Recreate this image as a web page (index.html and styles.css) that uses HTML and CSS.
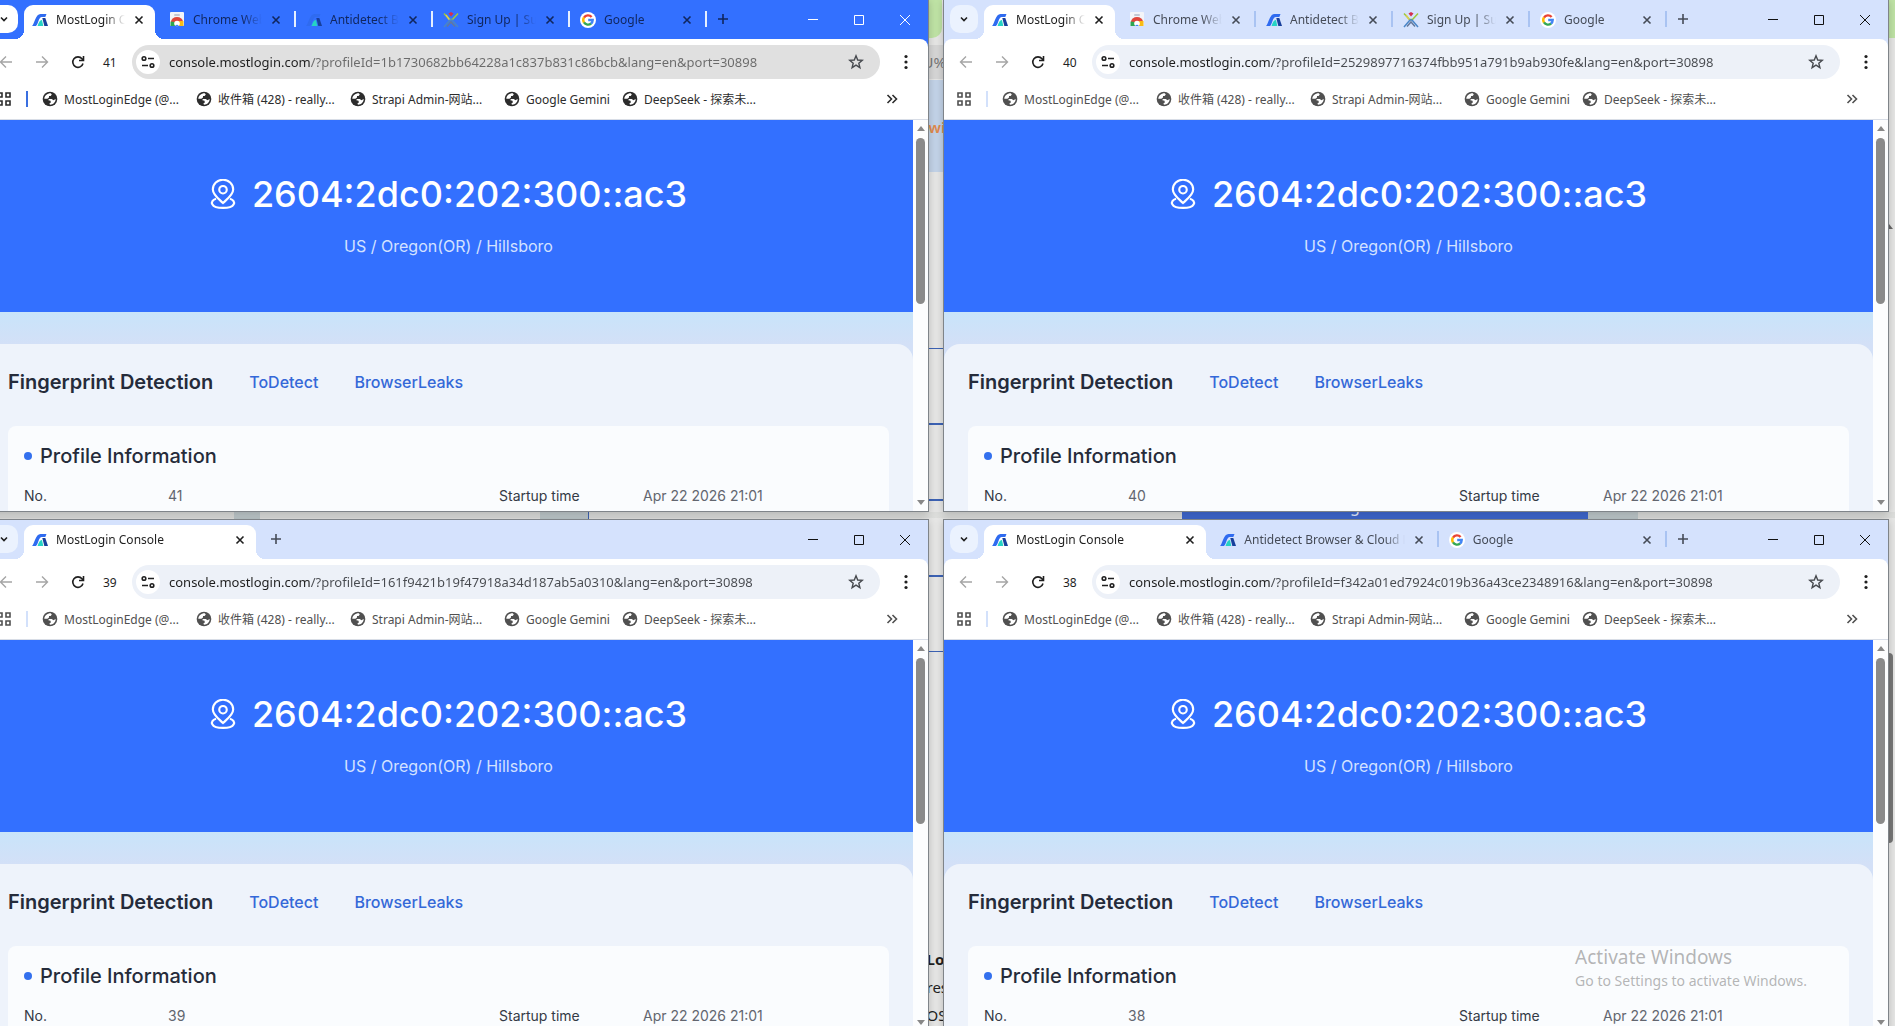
FILE: index.html
```html
<!DOCTYPE html>
<html lang="en">
<head>
  <meta charset="UTF-8" />
  <meta name="viewport" content="width=device-width, initial-scale=1.0"/>
  <title>MostLogin Console</title>
  <link rel="stylesheet" href="styles.css">
</head>
<body>

  <svg class="sprite" aria-hidden="true">
    <symbol id="logo" viewBox="0 0 16 16">
      <path fill="#2f6bf0" d="M0 14C2.500 12 3.500 2 8.500 2H14.500L13.300 5H9.800C6.500 5 6.500 12 4 14Z"/>
      <path fill="#25d3c4" d="M5.500 14C6.500 12 7 8.500 10 8L11.300 14Z"/>
      <path fill="#173f9c" d="M10.300 6H13.300L16 14H12.300Z"/>
    </symbol>
    <symbol id="store" viewBox="0 0 16 16">
      <rect x="1" y="0" width="14" height="14" rx="1" fill="#f3f4f8"/>
      <rect x="5" y="2" width="6" height="2" rx="1" fill="#c3c7d3"/>
      <path fill="#e0453a" d="M2 10a6 5 0 0 1 12 0l-2 1H4Z"/>
      <path fill="#f9bc15" d="M9 9h5.500v5H10Z"/>
      <path fill="#2fa552" d="M1.500 9.500L6 10l1 4H1.500Z"/>
      <circle cx="8" cy="11.500" r="2.800" fill="#fff"/>
      <path fill="#4285f4" d="M6.200 14a2 2.400 0 0 1 3.600 0Z"/>
    </symbol>
    <symbol id="person" viewBox="0 0 16 16">
      <g fill="none" stroke-width="1.500">
        <path stroke="#9dc83c" d="M1 1.500L6.500 7.500H9.500L15 1.500"/>
        <path stroke="#d9cf52" d="M3 3L7 8.500"/>
        <path stroke="#4a86c8" d="M1 15L7 8H9L15 15"/>
        <path stroke="#64799c" d="M4 14.500L8 10L12 14.500"/>
      </g>
      <path fill="#d32f4f" d="M5.500 1.500L8 0L10.500 1.500L8 4.500Z"/>
    </symbol>
    <symbol id="google" viewBox="0 0 16 16">
      <circle cx="8" cy="8" r="8" fill="#fff"/>
      <g fill="none" stroke-width="2.400">
        <path stroke="#ea4335" d="M4 5.600A4.700 4.700 0 0 1 11.600 5"/>
        <path stroke="#fbbc05" d="M4 5.500A4.700 4.700 0 0 0 4 10.500"/>
        <path stroke="#34a853" d="M4 10.400A4.700 4.700 0 0 0 11.100 11.500"/>
        <path stroke="#4285f4" d="M8.200 8H12.700A4.700 4.700 0 0 1 11 11.600"/>
      </g>
    </symbol>
    <symbol id="globe" viewBox="0 0 16 16">
      <circle cx="8" cy="8" r="7.300" fill="currentColor"/>
      <path fill="#fff" d="M2.300 7.800C2.300 4.800 5 2.300 8.800 2.300L9.800 3.400L8.600 5H7V6.600L5.400 7.800Z"/>
      <path fill="#fff" d="M6.600 8H9.800L11.400 9.200L13.700 8C13.700 11 11.300 13.700 8 13.700L7.400 12.600L9 11.200L8.200 9.600H6.600Z"/>
    </symbol>
    <symbol id="chevron" viewBox="0 0 16 16"><path class="line thick" d="M5 6.500L8 9.500L11 6.500"/></symbol>
    <symbol id="cross" viewBox="0 0 16 16"><path class="line thick" d="M4.500 4.500L11.500 11.500M11.500 4.500L4.500 11.500"/></symbol>
    <symbol id="plus" viewBox="0 0 16 16"><path class="line thick" d="M8 3V13M3 8H13"/></symbol>
    <symbol id="min" viewBox="0 0 16 16"><path class="line" d="M3 8.500H13"/></symbol>
    <symbol id="max" viewBox="0 0 16 16"><path class="line" d="M3.500 4.500H12.500V13.500H3.500Z"/></symbol>
    <symbol id="exit" viewBox="0 0 16 16"><path class="line" d="M3 4L13 14M13 4L3 14"/></symbol>
    <symbol id="back" viewBox="0 0 16 16"><path class="line medium" d="M14 8H3M8 2.500L2.500 8L8 13.500"/></symbol>
    <symbol id="forward" viewBox="0 0 16 16"><path class="line medium" d="M2 8H13M8 2.500L13.500 8L8 13.500"/></symbol>
    <symbol id="reload" viewBox="0 0 16 16"><path class="line thick" d="M13 9.500A5.200 5.200 0 1 1 12 4.800L13.300 6.300M13.500 2V6.500H9"/></symbol>
    <symbol id="tune" viewBox="0 0 16 16">
      <g class="line thick"><circle cx="4" cy="4.500" r="1.800"/><circle cx="12" cy="11.500" r="1.800"/><path d="M8 4.500H14M2 11.500H8"/></g>
    </symbol>
    <symbol id="star" viewBox="0 0 16 16"><path class="line medium" d="M8 1.800L9.700 6L14.300 6.300L10.800 9.200L11.900 13.700L8 11.200L4.100 13.700L5.200 9.200L1.700 6.300L6.300 6Z"/></symbol>
    <symbol id="kebab" viewBox="0 0 16 16"><g fill="currentColor"><circle cx="8" cy="2.500" r="1.600"/><circle cx="8" cy="8" r="1.600"/><circle cx="8" cy="13.500" r="1.600"/></g></symbol>
    <symbol id="apps" viewBox="0 0 16 16"><path class="line thick" d="M2 2H6V6H2ZM10 2H14V6H10ZM2 10H6V14H2ZM10 10H14V14H10Z"/></symbol>
    <symbol id="more" viewBox="0 0 16 16"><path class="line thick" d="M3.500 4L7.500 8L3.500 12M8.500 4L12.500 8L8.500 12"/></symbol>
    <symbol id="pin" viewBox="0 0 24 28">
      <g class="line wide">
        <path d="M12 22.500C8 18.500 2.500 14.500 2.500 9.700A9.500 9 0 0 1 21.500 9.700C21.500 14.500 16 18.500 12 22.500Z"/>
        <circle cx="12" cy="10" r="3.500"/>
        <path d="M5.500 18.500C-1 20.500 .5 27 12 27S25 20.500 18.500 18.500"/>
      </g>
    </symbol>
  </svg>

  <!-- what is open behind the browser windows -->
  <div class="backdrop">
    <div class="column">
      <span class="green"></span>
      <span class="address">U%</span>
      <span class="banner">wi</span>
      <span class="rule"></span>
      <span class="rule"></span>
      <span class="rule"></span>
      <span class="rule"></span>
      <span class="rule last"></span>
      <span class="note"><b>Lo</b><br>res<br>OS</span>
    </div>
    <div class="band">
      <span class="patch"></span>
      <span class="patch box"></span>
      <span class="blue">g</span>
      <span class="patch side"></span>
    </div>
    <div class="edge">
      <span class="green"></span>
      <span class="arrow"></span>
      <span class="thumb"></span>
    </div>
  </div>

  <main class="desktop" id="desktop"></main>

  <div class="watermark">
    <p class="big">Activate Windows</p>
    <p>Go to Settings to activate Windows.</p>
  </div>

  <script>
    const windows = [
      { no: 41, id: "1b1730682bb64228a1c837b831c86bcb", theme: "vivid", tabs: ["console", "store", "anti", "signup", "google"] },
      { no: 40, id: "2529897716374fbb951a791b9ab930fe", theme: "", tabs: ["console", "store", "anti", "signup", "google"] },
      { no: 39, id: "161f9421b19f47918a34d187ab5a0310", theme: "", tabs: ["console"] },
      { no: 38, id: "f342a01ed7924c019b36a43ce2348916", theme: "", tabs: ["console", "anti", "google"] }
    ];

    const tabInfo = {
      console: ["logo", "MostLogin Console"],
      store: ["store", "Chrome Web Store"],
      anti: ["logo", "Antidetect Browser &amp; Cloud Phone"],
      signup: ["person", "Sign Up | Sun"],
      google: ["google", "Google"]
    };

    const bookmarks = ["MostLoginEdge (@...", "收件箱 (428) - really...", "Strapi Admin-网站...", "Google Gemini", "DeepSeek - 探索未..."];

    function icon(name, cls = "icon") {
      return `<svg class="${cls}" aria-hidden="true"><use href="#${name}"></use></svg>`;
    }

    function button(name, cls, label) {
      return `<button class="${cls}" aria-label="${label}">${icon(name)}</button>`;
    }

    function tab(key, i) {
      const [img, title] = tabInfo[key];
      return `
        <li class="tab ${i === 0 ? "active" : ""}">
          ${icon(img)}
          <span class="tab-title">${title}</span>
          ${button("cross", "close", "Close tab")}
        </li>`;
    }

    function browser(w) {
      return `
        <section class="browser ${w.theme}">
          <header class="strip">
            ${button("chevron", "search", "Search tabs")}
            <ul class="tabs">${w.tabs.map(tab).join("")}</ul>
            ${button("plus", "new-tab", "New tab")}
            <div class="controls">
              ${button("min", "control", "Minimize")}${button("max", "control", "Maximize")}${button("exit", "control", "Close")}
            </div>
          </header>
          <div class="toolbar">
            ${button("back", "tool dim", "Back")}
            ${button("forward", "tool dim", "Forward")}
            ${button("reload", "tool", "Reload")}
            <span class="number">${w.no}</span>
            <div class="omnibox">
              ${button("tune", "site", "Site information")}
              <input type="text" aria-label="Address" spellcheck="false" value="console.mostlogin.com/?profileId=${w.id}&amp;lang=en&amp;port=30898">
              ${button("star", "star", "Bookmark this page")}
            </div>
            ${button("kebab", "tool menu", "Menu")}
          </div>
          <nav class="bookmarks">
            ${button("apps", "apps", "Apps")}
            <ul>${bookmarks.map(b => `<li><a href="#">${icon("globe")}${b}</a></li>`).join("")}</ul>
            ${button("more", "more", "More bookmarks")}
          </nav>
          <div class="view">
            <div class="page">
              <div class="hero">
                <h1>${icon("pin", "pin")}2604:2dc0:202:300::ac3</h1>
                <p>US / Oregon(OR) / Hillsboro</p>
              </div>
              <div class="panel">
                <div class="panel-head">
                  <h2>Fingerprint Detection</h2>
                  <a href="#">ToDetect</a>
                  <a href="#">BrowserLeaks</a>
                </div>
                <div class="card">
                  <h3>Profile Information</h3>
                  <dl>
                    <dt>No.</dt><dd>${w.no}</dd>
                    <dt>Startup time</dt><dd>Apr 22 2026 21:01</dd>
                  </dl>
                </div>
              </div>
            </div>
            <div class="scrollbar"><i class="up"></i><i class="bar"></i><i class="down"></i></div>
          </div>
        </section>`;
    }

    document.getElementById("desktop").innerHTML = windows.map(browser).join("");
  </script>

</body>
</html>
```
FILE: styles.css
```css
* {
  margin: 0;
  padding: 0;
  box-sizing: border-box;
}

body {
  position: relative;
  height: 100vh;
  overflow: hidden;
  background: #e6e6e5;
  font-family: "Noto Sans", "Noto Sans CJK SC", sans-serif;
  font-size: 12px;
  color: #1f1f1f;
}

ul {
  list-style: none;
}

a {
  color: inherit;
  text-decoration: none;
}

button {
  display: flex;
  align-items: center;
  justify-content: center;
  flex: none;
  border: none;
  background: none;
  color: inherit;
  cursor: pointer;
}

.sprite {
  position: absolute;
  width: 0;
  height: 0;
}

.icon {
  width: 16px;
  height: 16px;
  flex: none;
}

.line {
  fill: none;
  stroke: currentColor;
  stroke-width: 1;
}

.medium {
  stroke-width: 1.4;
}

.thick {
  stroke-width: 1.6;
}

.wide {
  stroke-width: 2;
}

/* windows */
.desktop {
  position: relative;
  display: grid;
  grid-template-columns: 1fr 1fr;
  grid-auto-rows: 50vh;
  gap: 7px 14px;
  margin: -1px 6px 0 -17px;
}

.browser {
  --strip: #d5e2fd;
  --chip: #ebf2fe;
  --divider: #a9c3f2;
  --tab-text: #454b57;
  --control: #111;
  --box: #edf1f8;
  --path: #474a4f;
  --mark: #505050;
  --mark-line: #d3e1fb;
  display: flex;
  flex-direction: column;
  min-width: 0;
  overflow: hidden;
  background: var(--strip);
  border: 1px solid #7f8489;
  box-shadow: 0 2px 8px rgba(0, 0, 0, 0.2);
}

.browser.vivid {
  --strip: #3370ff;
  --chip: #fff;
  --divider: #e6efff;
  --tab-text: #10265e;
  --control: #fff;
  --box: #e0e0e0;
  --path: #6a6a6a;
  --mark: #2c2c2c;
  --mark-line: #3a6fe0;
}

/* tab strip */
.strip {
  display: flex;
  height: 39px;
  flex: none;
  color: var(--tab-text);
}

.search {
  width: 28px;
  height: 28px;
  margin: 5px 3px 0 6px;
  border-radius: 10px;
  background: var(--chip);
  color: #1f1f1f;
}

.tabs {
  display: flex;
  min-width: 0;
}

.tab {
  position: relative;
  display: flex;
  align-items: center;
  width: 238px;
  min-width: 0;
  padding: 0 11px;
}

.tab:not(.active)::after {
  content: "";
  position: absolute;
  right: -1px;
  top: 11px;
  width: 2px;
  height: 16px;
  background: var(--divider);
}

.tab-title {
  flex: 1;
  min-width: 0;
  margin: 0 6px 0 8px;
  overflow: hidden;
  white-space: nowrap;
  -webkit-mask-image: linear-gradient(to left, transparent, #000 20px);
  mask-image: linear-gradient(to left, transparent, #000 20px);
}

.close {
  width: 16px;
  height: 16px;
}

.tab.active {
  color: #1f1f1f;
  z-index: 1;
}

.tab.active::before {
  content: "";
  position: absolute;
  z-index: -1;
  inset: 5px 3px 0;
  background: #fff;
  border-radius: 9px 9px 0 0;
}

.tab.active::after {
  content: "";
  position: absolute;
  z-index: -1;
  left: -6px;
  right: -6px;
  bottom: 0;
  height: 9px;
  background:
    radial-gradient(circle at 0 0, transparent 9px, #fff 9px) left / 9px 9px no-repeat,
    radial-gradient(circle at 100% 0, transparent 9px, #fff 9px) right / 9px 9px no-repeat;
}

.new-tab {
  width: 28px;
  height: 28px;
  margin: 5px 53px 0 3px;
}

.controls {
  display: flex;
  margin-left: auto;
  color: var(--control);
}

.control {
  width: 46px;
  height: 37px;
}

/* address row */
.toolbar {
  display: flex;
  align-items: center;
  height: 40px;
  padding: 6px 6px 0 4px;
  flex: none;
  background: #fff;
  border-radius: 8px 8px 0 0;
}

.tool {
  width: 36px;
  height: 34px;
}

.tool.dim {
  color: #a5a5a5;
}

.menu {
  width: 32px;
  margin-left: auto;
}

.number {
  width: 36px;
  padding-left: 7px;
}

.omnibox {
  display: flex;
  align-items: center;
  flex: 1;
  height: 34px;
  margin-right: 10px;
  padding: 0 14px 0 4px;
  border-radius: 17px;
  background: var(--box);
}

.site {
  width: 24px;
  height: 24px;
  border-radius: 12px;
  background: #fff;
}

.omnibox input {
  flex: 1;
  min-width: 0;
  height: 24px;
  margin-left: 9px;
  border: none;
  outline: none;
  font: inherit;
  font-size: 13px;
  /* host darker than the rest of the address */
  background: linear-gradient(to right, #1f1f1f 141px, var(--path) 141px);
  -webkit-background-clip: text;
  background-clip: text;
  color: transparent;
}

.star {
  width: 20px;
  height: 24px;
  color: #474a4f;
}

/* bookmarks */
.bookmarks {
  display: flex;
  align-items: center;
  height: 41px;
  padding: 0 28px 0 12px;
  flex: none;
  background: #fff;
  border-bottom: 1px solid #d8dde6;
  color: var(--mark);
}

.bookmarks ul {
  display: flex;
  margin-left: 14px;
  padding-left: 14px;
  border-left: 2px solid var(--mark-line);
}

.bookmarks li {
  width: 154px;
  height: 16px;
}

.bookmarks li:nth-child(n + 4) {
  width: 118px;
}

.bookmarks a {
  display: flex;
  align-items: center;
  gap: 6px;
  height: 16px;
  white-space: nowrap;
}

.more {
  margin-left: auto;
}

/* page */
.view {
  display: flex;
  flex: 1;
  min-height: 0;
  background: #fcfdfe;
}

.page {
  flex: 1;
  min-width: 0;
  overflow: hidden;
  background: linear-gradient(#c8e4fa 192px, #d3e0f7 224px);
  font-family: Inter, sans-serif;
}

.hero {
  padding: 50px 0 54px;
  background: #3370ff;
  text-align: center;
}

.hero h1 {
  display: flex;
  align-items: center;
  justify-content: center;
  gap: 16px;
  font-size: 36px;
  font-weight: 500;
  line-height: 48px;
  color: #fff;
}

.pin {
  width: 26px;
  height: 30px;
}

.hero p {
  margin-top: 16px;
  font-size: 16px;
  line-height: 24px;
  color: #d3e2ff;
}

.panel {
  height: 100%;
  margin-top: 32px;
  padding: 24px;
  border-radius: 16px 16px 0 0;
  background: #eef3fb;
}

.panel-head {
  display: flex;
  align-items: center;
  gap: 36px;
}

.panel-head h2 {
  font-size: 20px;
  font-weight: 600;
  line-height: 28px;
  color: #252b3a;
}

.panel-head a {
  font-size: 16px;
  font-weight: 500;
  color: #3468d8;
}

.card {
  height: 100%;
  margin-top: 30px;
  padding: 16px;
  border-radius: 8px;
  background: #fafcfe;
}

.card h3 {
  display: flex;
  align-items: center;
  gap: 8px;
  font-size: 20px;
  font-weight: 500;
  line-height: 28px;
  color: #252b3a;
}

.card h3::before {
  content: "";
  width: 8px;
  height: 8px;
  border-radius: 50%;
  background: #3370ee;
}

.card dl {
  display: grid;
  grid-template-columns: 144px 1fr 144px 230px;
  margin-top: 16px;
  font-size: 14px;
  line-height: 20px;
}

.card dt {
  color: #343a46;
}

.card dd {
  color: #62666f;
}

.scrollbar {
  display: flex;
  flex-direction: column;
  align-items: center;
  width: 15px;
  padding: 6px 0;
}

.up,
.down {
  border: 4px solid transparent;
  border-top-width: 0;
  border-bottom: 5px solid #888;
}

.down {
  margin-top: auto;
  transform: rotate(180deg);
}

.bar {
  width: 9px;
  height: 166px;
  margin-top: 7px;
  border-radius: 5px;
  background: #8a8a8a;
}

/* behind the windows */
.backdrop span {
  position: absolute;
}

.column {
  position: absolute;
  top: 0;
  bottom: 0;
  left: calc(50% - 19px);
  width: 15px;
  overflow: hidden;
  font-size: 15px;
  line-height: 28px;
}

.green {
  top: 0;
  width: 13px;
  height: 38px;
  border-radius: 0 0 10px 0;
  background: #bfe3a5;
}

.address {
  top: 45px;
  width: 15px;
  height: 34px;
  line-height: 34px;
  text-indent: -6px;
  background: #d6d6d6;
  color: #777;
}

.banner {
  top: 80px;
  width: 15px;
  height: 92px;
  line-height: 94px;
  background: #c3d3e8;
  color: #e08a4e;
  font-weight: 600;
}

.rule {
  top: 348px;
  width: 15px;
  height: 1px;
  background: #3d63b5;
}

.rule:nth-of-type(5) {
  top: 423px;
  height: 2px;
}

.rule:nth-of-type(6) {
  top: 499px;
  height: 2px;
}

.rule:nth-of-type(7) {
  top: 575px;
  height: 2px;
}

.rule.last {
  top: 651px;
}

.note {
  top: 945px;
  left: -2px;
}

.band {
  position: absolute;
  top: 50%;
  left: 0;
  right: 0;
  height: 6px;
  margin-top: -1px;
  background: #dcdddb;
}

.patch {
  left: 234px;
  width: 26px;
  height: 8px;
  background: #bfc9cc;
}

.patch.box {
  left: 540px;
  width: 49px;
  border-right: 1px solid #3d63b5;
}

.patch.side {
  left: 1588px;
  width: 50px;
}

/* only the foot of this button shows between the windows */
.blue {
  top: -14px;
  left: 1182px;
  width: 406px;
  height: 22px;
  background: #3f68d0;
  color: #e8efff;
  font-size: 16px;
  line-height: 16px;
  text-indent: 168px;
}

.edge {
  position: absolute;
  top: 0;
  right: 0;
  bottom: 0;
  width: 6px;
}

.edge .green {
  width: 6px;
  border-radius: 0;
}

.edge .arrow {
  top: 224px;
  border: 4px solid transparent;
  border-top-width: 0;
  border-bottom: 5px solid #666;
  margin-left: -4px;
}

.edge .thumb {
  top: 653px;
  width: 4px;
  height: 190px;
  border-radius: 0 4px 4px 0;
  background: #777;
}

/* bottom right notice */
.watermark {
  position: absolute;
  right: 88px;
  bottom: 34px;
  font-size: 14px;
  line-height: 23px;
  color: rgba(120, 120, 120, 0.55);
}

.watermark .big {
  font-size: 19px;
}
```
